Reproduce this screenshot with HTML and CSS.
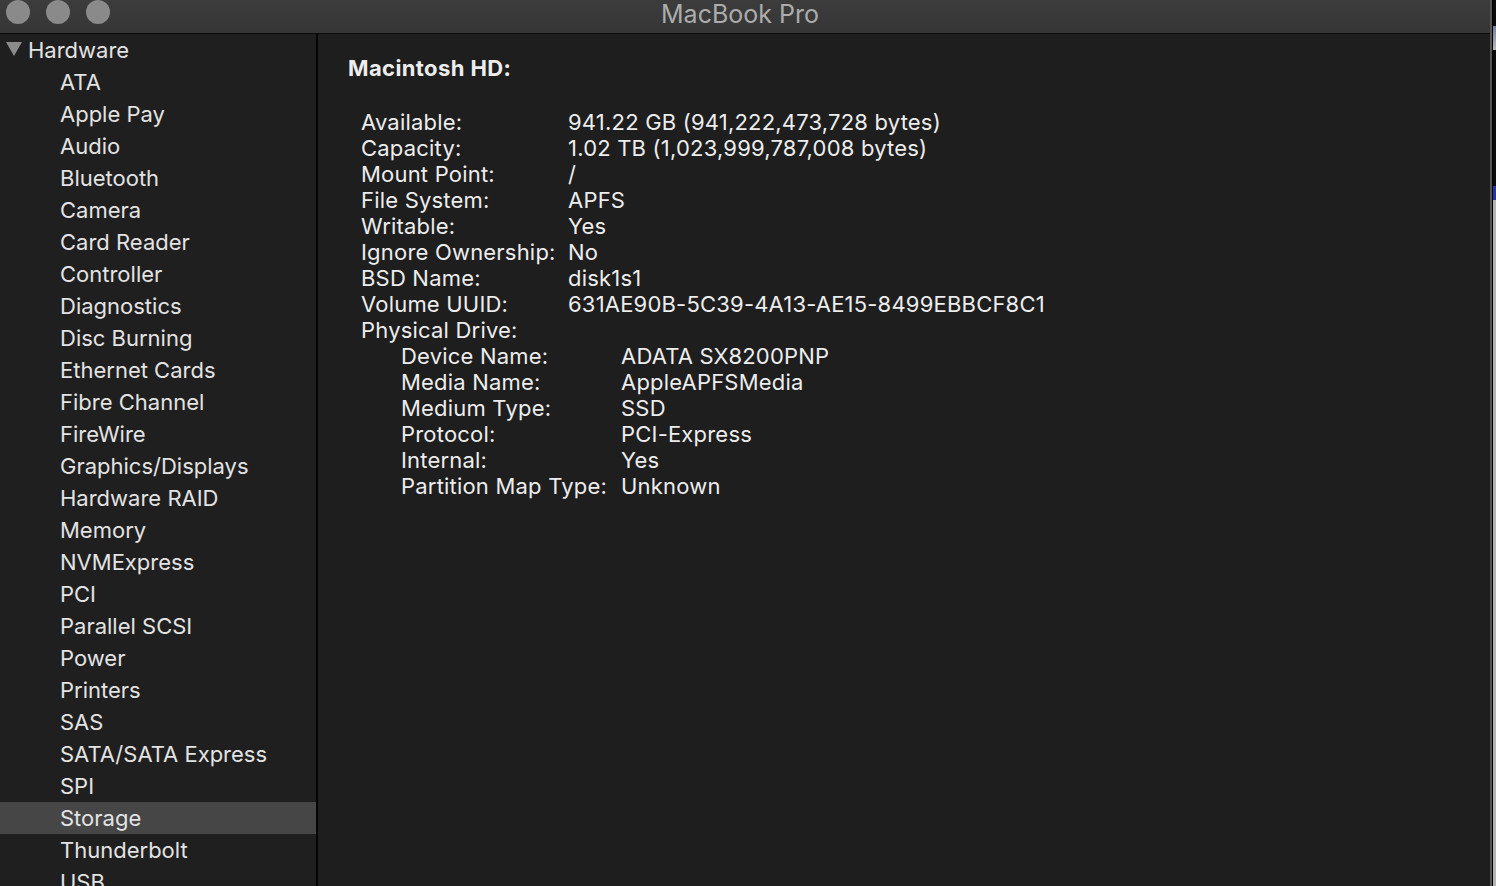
FILE: index.html
```html
<!doctype html>
<html lang="en">
<head>
    <meta charset="UTF-8">
    <title>MacBook Pro</title>
    <link rel="stylesheet" href="styles.css">
</head>
<body>
<div class="screen">
    <div class="window">
        <div class="titlebar">
            <div class="lights">
                <span class="light"></span>
                <span class="light"></span>
                <span class="light"></span>
            </div>
            <div class="title">MacBook Pro</div>
        </div>

        <div class="main">
            <ul class="sidebar">
                <li class="group">
                    <svg class="disclosure" width="16" height="14" viewBox="0 0 16 14"><polygon points="0,0 16,0 8,14" fill="#8b8b8b"/></svg>
                    Hardware
                </li>
                <li>ATA</li>
                <li>Apple Pay</li>
                <li>Audio</li>
                <li>Bluetooth</li>
                <li>Camera</li>
                <li>Card Reader</li>
                <li>Controller</li>
                <li>Diagnostics</li>
                <li>Disc Burning</li>
                <li>Ethernet Cards</li>
                <li>Fibre Channel</li>
                <li>FireWire</li>
                <li>Graphics/Displays</li>
                <li>Hardware RAID</li>
                <li>Memory</li>
                <li>NVMExpress</li>
                <li>PCI</li>
                <li>Parallel SCSI</li>
                <li>Power</li>
                <li>Printers</li>
                <li>SAS</li>
                <li>SATA/SATA Express</li>
                <li>SPI</li>
                <li class="selected">Storage</li>
                <li>Thunderbolt</li>
                <li>USB</li>
            </ul>

            <div class="content">
                <h1 class="volume">Macintosh HD:</h1>

                <dl class="props">
                    <dt>Available:</dt><dd>941.22 GB (941,222,473,728 bytes)</dd>
                    <dt>Capacity:</dt><dd>1.02 TB (1,023,999,787,008 bytes)</dd>
                    <dt>Mount Point:</dt><dd>/</dd>
                    <dt>File System:</dt><dd>APFS</dd>
                    <dt>Writable:</dt><dd>Yes</dd>
                    <dt>Ignore Ownership:</dt><dd>No</dd>
                    <dt>BSD Name:</dt><dd>disk1s1</dd>
                    <dt>Volume UUID:</dt><dd>631AE90B-5C39-4A13-AE15-8499EBBCF8C1</dd>
                    <dt>Physical Drive:</dt><dd></dd>
                </dl>

                <dl class="props sub">
                    <dt>Device Name:</dt><dd>ADATA SX8200PNP</dd>
                    <dt>Media Name:</dt><dd>AppleAPFSMedia</dd>
                    <dt>Medium Type:</dt><dd>SSD</dd>
                    <dt>Protocol:</dt><dd>PCI-Express</dd>
                    <dt>Internal:</dt><dd>Yes</dd>
                    <dt>Partition Map Type:</dt><dd>Unknown</dd>
                </dl>
            </div>
        </div>
    </div>
    <div class="desktop"></div>
</div>
</body>
</html>
```

FILE: styles.css
```css
body {
    margin: 0;
    padding: 0;
    background: #000;
    font-family: Inter, "Noto Sans", sans-serif;
    overflow: hidden;
}

.screen {
    display: flex;
    width: 1496px;
    height: 886px;
    overflow: hidden;
}

.window {
    display: flex;
    flex-direction: column;
    width: 1490px;
    height: 886px;
    background: #1e1e1e;
    border-right: 2px solid #565656;
}

.desktop {
    flex: 1;
    border-left: 1px solid #000;
    background: linear-gradient(#0b0b0b 0, #0b0b0b 26px, #6f7ea0 26px, #b9b9b9 50px, #0b0b0b 50px, #0b0b0b 186px, #2436a0 186px, #2436a0 200px, #b4b4b4 200px);
}

.titlebar {
    position: relative;
    height: 33px;
    flex: none;
    background: linear-gradient(#3c3c3c, #363636);
    border-bottom: 1px solid #0a0a0a;
}

.lights {
    position: absolute;
    left: 6px;
    top: 0;
    display: flex;
    gap: 16px;
}

.light {
    width: 24px;
    height: 24px;
    border-radius: 50%;
    background: #8a8a8a;
}

.title {
    text-align: center;
    padding-right: 10px;
    font-size: 25px;
    line-height: 28px;
    color: #acacac;
}

.main {
    display: flex;
    flex: 1;
    min-height: 0;
}

.sidebar {
    width: 316px;
    flex: none;
    margin: 0;
    padding: 0;
    list-style: none;
    background: #1f1f1f;
    border-right: 2px solid #050505;
    overflow: hidden;
}

.sidebar li {
    height: 32px;
    line-height: 32px;
    padding-left: 60px;
    font-size: 22px;
    color: #e3e3e3;
    white-space: nowrap;
}

.sidebar .group {
    display: flex;
    align-items: center;
    padding-left: 6px;
}

.disclosure {
    margin-right: 6px;
    margin-top: -2px;
}

.sidebar .selected {
    background: #464646;
}

.content {
    flex: 1;
    padding: 18px 0 0 30px;
    color: #ededed;
}

.volume {
    margin: 0 0 25px;
    font-size: 22px;
    line-height: 32px;
    font-weight: 700;
    letter-spacing: 0.4px;
}

.props {
    display: grid;
    grid-template-columns: 207px auto;
    justify-content: start;
    margin: 0 0 0 13px;
    font-size: 22px;
    line-height: 26px;
    letter-spacing: 0.2px;
}

.props dt,
.props dd {
    margin: 0;
    white-space: nowrap;
}

.props.sub {
    grid-template-columns: 220px auto;
    margin-left: 53px;
}
```
